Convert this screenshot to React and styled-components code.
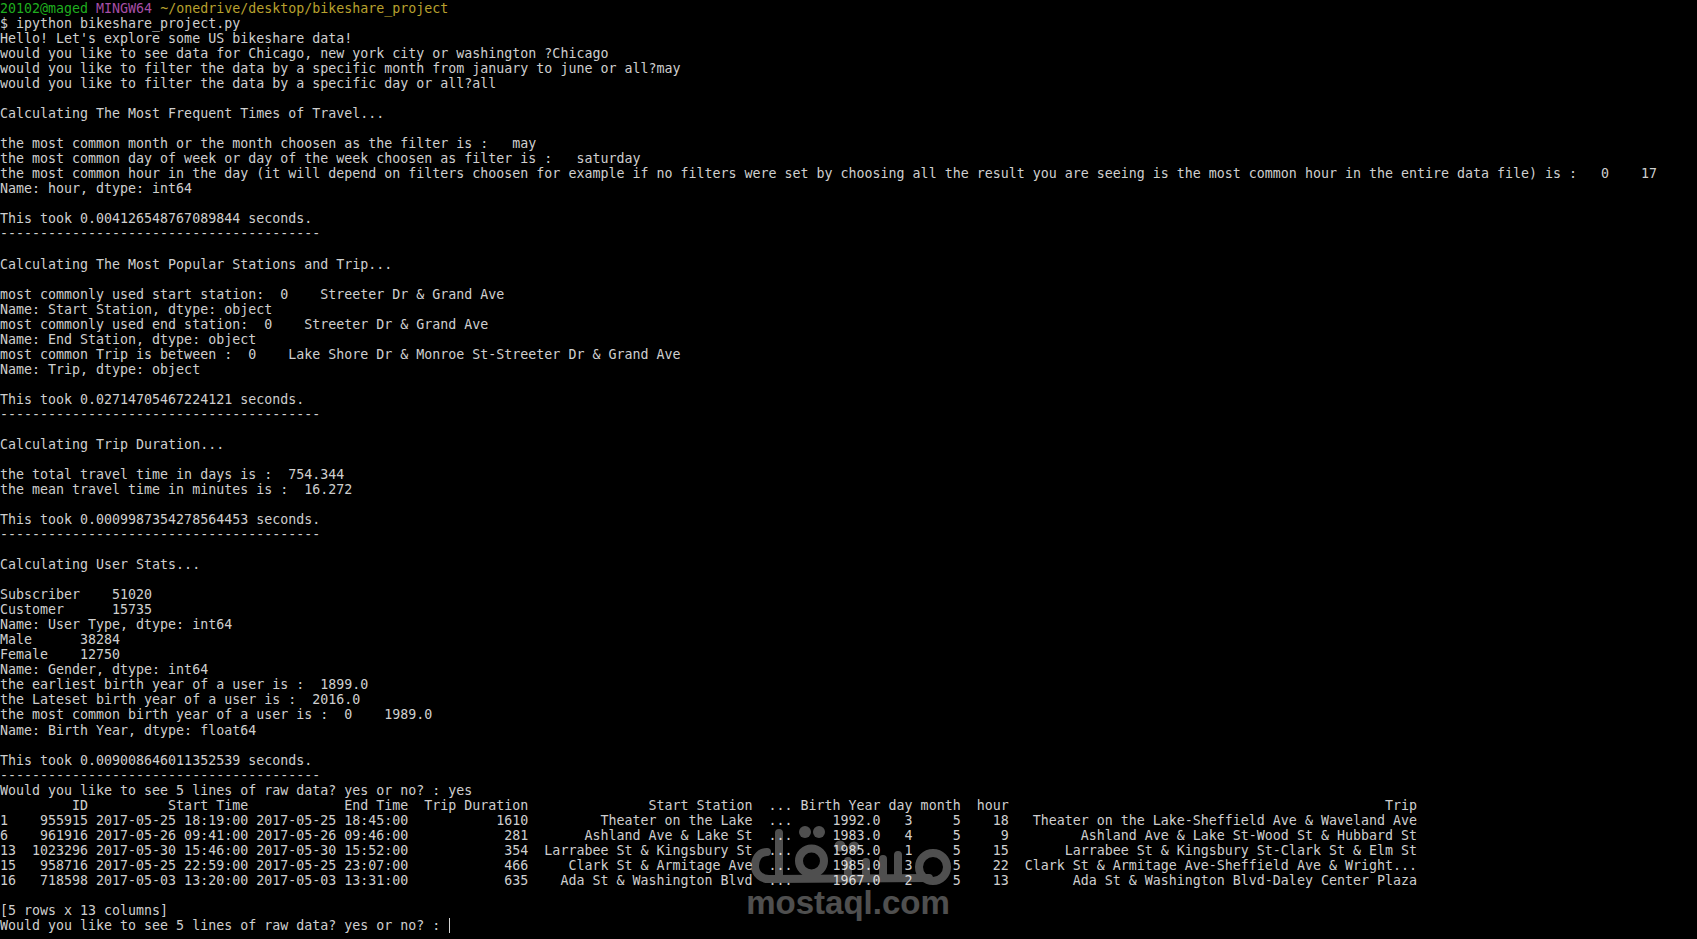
import React from "react";
import styled, { createGlobalStyle } from "styled-components";

const GlobalStyle = createGlobalStyle`
  html, body {
    margin: 0;
    height: 100%;
    background: #000;
  }
`;

const Terminal = styled.div`
  position: relative;
  box-sizing: border-box;
  width: 1697px;
  height: 939px;
  padding-top: 1px;
  overflow: hidden;
  background: #000;
  color: #cfcfcf;
  font-family: "DejaVu Sans Mono", "Liberation Mono", monospace;
  font-size: 13.3px;
  line-height: 15.04px;
`;

const Line = styled.div`
  height: 15.04px;
  white-space: pre;
`;

const Prompt = styled.span`
  color: ${(p) => p.$color};
`;

const Cursor = styled.span`
  display: inline-block;
  width: 1px;
  height: 15px;
  margin-left: 1px;
  background: #d4d4d4;
  vertical-align: top;
`;

const Watermark = styled.div`
  position: absolute;
  left: 743px;
  top: 822px;
  width: 210px;
  color: #fff;
  opacity: 0.31;
  font-family: "Liberation Sans", sans-serif;
  font-weight: bold;
  font-size: 33px;
  line-height: 34px;
`;

const LogoMark = styled.svg`
  display: block;
  width: 210px;
  height: 70px;
`;

const LogoText = styled.div`
  width: 210px;
  margin-top: -6px;
  text-align: center;
`;

const intro = `$ ipython bikeshare_project.py
Hello! Let's explore some US bikeshare data!
would you like to see data for Chicago, new york city or washington ?Chicago
would you like to filter the data by a specific month from january to june or all?may
would you like to filter the data by a specific day or all?all

Calculating The Most Frequent Times of Travel...

the most common month or the month choosen as the filter is :   may
the most common day of week or day of the week choosen as filter is :   saturday
the most common hour in the day (it will depend on filters choosen for example if no filters were set by choosing all the result you are seeing is the most common hour in the entire data file) is :   0    17
Name: hour, dtype: int64

This took 0.004126548767089844 seconds.
----------------------------------------

Calculating The Most Popular Stations and Trip...

most commonly used start station:  0    Streeter Dr & Grand Ave
Name: Start Station, dtype: object
most commonly used end station:  0    Streeter Dr & Grand Ave
Name: End Station, dtype: object
most common Trip is between :  0    Lake Shore Dr & Monroe St-Streeter Dr & Grand Ave
Name: Trip, dtype: object

This took 0.02714705467224121 seconds.
----------------------------------------

Calculating Trip Duration...

the total travel time in days is :  754.344
the mean travel time in minutes is :  16.272

This took 0.0009987354278564453 seconds.
----------------------------------------

Calculating User Stats...

Subscriber    51020
Customer      15735
Name: User Type, dtype: int64
Male      38284
Female    12750
Name: Gender, dtype: int64
the earliest birth year of a user is :  1899.0
the Lateset birth year of a user is :  2016.0
the most common birth year of a user is :  0    1989.0
Name: Birth Year, dtype: float64

This took 0.009008646011352539 seconds.
----------------------------------------
Would you like to see 5 lines of raw data? yes or no? : yes`.split("\n");

// pandas style frame, every cell is padded to its column width
const columns = [
  ["", 2, "left"],
  ["ID", 9],
  ["Start Time", 20],
  ["End Time", 20],
  ["Trip Duration", 15],
  ["Start Station", 28],
  ["...", 5],
  ["Birth Year", 11],
  ["day", 4],
  ["month", 6],
  ["hour", 6],
  ["Trip", 51],
];

const rows = [
  ["1", "955915", "2017-05-25 18:19:00", "2017-05-25 18:45:00", "1610", "Theater on the Lake", "...", "1992.0", "3", "5", "18", "Theater on the Lake-Sheffield Ave & Waveland Ave"],
  ["6", "961916", "2017-05-26 09:41:00", "2017-05-26 09:46:00", "281", "Ashland Ave & Lake St", "...", "1983.0", "4", "5", "9", "Ashland Ave & Lake St-Wood St & Hubbard St"],
  ["13", "1023296", "2017-05-30 15:46:00", "2017-05-30 15:52:00", "354", "Larrabee St & Kingsbury St", "...", "1985.0", "1", "5", "15", "Larrabee St & Kingsbury St-Clark St & Elm St"],
  ["15", "958716", "2017-05-25 22:59:00", "2017-05-25 23:07:00", "466", "Clark St & Armitage Ave", "...", "1985.0", "3", "5", "22", "Clark St & Armitage Ave-Sheffield Ave & Wright..."],
  ["16", "718598", "2017-05-03 13:20:00", "2017-05-03 13:31:00", "635", "Ada St & Washington Blvd", "...", "1967.0", "2", "5", "13", "Ada St & Washington Blvd-Daley Center Plaza"],
];

const formatRow = (cells) =>
  cells
    .map((cell, i) => {
      const [, width, align] = columns[i];
      return align === "left" ? cell.padEnd(width) : cell.padStart(width);
    })
    .join("");

const header = columns.map((c) => c[0]);
const table = [header, ...rows].map(formatRow);

const Logo = () => (
  <LogoMark viewBox="0 0 210 70" fill="none" stroke="#fff" strokeWidth="8" strokeLinecap="round">
    <path d="M24 30C15 30 12 38 12 44C12 52 19 58 28 57L186 56" />
    <path d="M36 11V55" />
    <circle cx="68.5" cy="39" r="12.5" />
    <circle cx="190" cy="45" r="14" />
    <path d="M105 39V55M123 40V55M140 37V55M155 33V55" />
    <circle cx="62" cy="10" r="6" fill="#fff" stroke="none" />
    <circle cx="76" cy="10" r="6" fill="#fff" stroke="none" />
    <circle cx="97" cy="24" r="5.5" fill="#fff" stroke="none" />
    <circle cx="111" cy="25" r="5.5" fill="#fff" stroke="none" />
  </LogoMark>
);

export default function App() {
  return (
    <>
      <GlobalStyle />
      <Terminal>
        <Line>
          <Prompt $color="#1fae1f">20102@maged </Prompt>
          <Prompt $color="#a64fa6">MINGW64 </Prompt>
          <Prompt $color="#b8a12e">~/onedrive/desktop/bikeshare_project</Prompt>
        </Line>
        {intro.map((text, i) => (
          <Line key={i}>{text}</Line>
        ))}
        {table.map((text, i) => (
          <Line key={i}>{text}</Line>
        ))}
        <Line> </Line>
        <Line>[5 rows x 13 columns]</Line>
        <Line>
          Would you like to see 5 lines of raw data? yes or no? : <Cursor />
        </Line>
        <Watermark>
          <Logo />
          <LogoText>mostaql.com</LogoText>
        </Watermark>
      </Terminal>
    </>
  );
}
